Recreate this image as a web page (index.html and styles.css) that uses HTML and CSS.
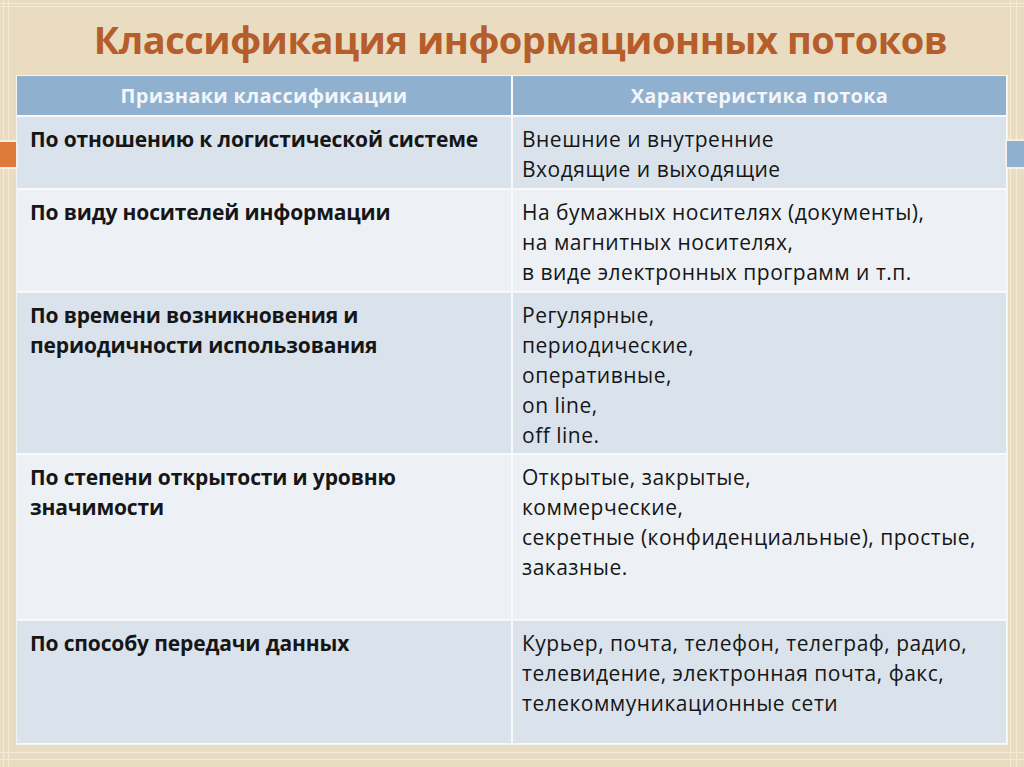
FILE: index.html
```html
<!DOCTYPE html>
<html lang="ru">
<head>
<meta charset="utf-8">
<title>Классификация информационных потоков</title>
<link rel="stylesheet" href="styles.css">
</head>
<body>
<div class="slide">
  <div class="mark mark-left"></div>
  <div class="mark mark-right"></div>
  <h1 class="title">Классификация информационных потоков</h1>
  <div class="table">
    <div class="cell head">Признаки классификации</div>
    <div class="cell head">Характеристика потока</div>

    <div class="cell key odd r1">По отношению к логистической системе</div>
    <div class="cell val odd r1">Внешние и внутренние<br>Входящие и выходящие</div>

    <div class="cell key even r2">По виду носителей информации</div>
    <div class="cell val even r2">На бумажных носителях (документы),<br>на магнитных носителях,<br>в виде электронных программ и т.п.</div>

    <div class="cell key odd r3">По времени возникновения и<br>периодичности использования</div>
    <div class="cell val odd r3">Регулярные,<br>периодические,<br>оперативные,<br>on line,<br>off line.</div>

    <div class="cell key even r4">По степени открытости и уровню<br>значимости</div>
    <div class="cell val even r4">Открытые, закрытые,<br>коммерческие,<br>секретные (конфиденциальные), простые,<br>заказные.</div>

    <div class="cell key odd r5">По способу передачи данных</div>
    <div class="cell val odd r5">Курьер, почта, телефон, телеграф, радио,<br>телевидение, электронная почта, факс,<br>телекоммуникационные сети</div>
  </div>
</div>
</body>
</html>
```

FILE: styles.css
```css
html, body {
  margin: 0;
  padding: 0;
}
body {
  width: 1024px;
  height: 767px;
  overflow: hidden;
  background-color: #e9dcc1;
  font-family: "Open Sans", "DejaVu Sans", sans-serif;
}
.slide {
  position: relative;
  width: 1024px;
  height: 767px;
  box-sizing: border-box;
  padding: 0 18px 0 17px;
  display: flex;
  flex-direction: column;
  background-image:
    linear-gradient(to right, transparent 3px, #f4ecdb 3px, #f4ecdb 4px, transparent 4px, transparent 8px, #f4ecdb 8px, #f4ecdb 9px, transparent 9px),
    linear-gradient(to left, transparent 7px, #f4ecdb 7px, #f4ecdb 8px, transparent 8px, transparent 13px, #f4ecdb 13px, #f4ecdb 14px, transparent 14px),
    linear-gradient(to bottom, transparent 3px, #f4ecdb 3px, #f4ecdb 4px, transparent 4px, transparent 6px, #f4ecdb 6px, #f4ecdb 7px, transparent 7px),
    linear-gradient(to top, transparent 7px, #f4ecdb 7px, #f4ecdb 8px, transparent 8px, transparent 14px, #f4ecdb 14px, #f4ecdb 15px, transparent 15px);
}
.mark {
  position: absolute;
  top: 142px;
  height: 25px;
}
.mark-left {
  left: 0;
  width: 16px;
  background: #e07a3a;
  box-shadow: 0 -2px 0 #f6efe2, 0 2px 0 #f6efe2, 2px 0 0 #f6efe2;
}
.mark-right {
  right: 0;
  width: 17px;
  top: 141px;
  height: 26px;
  background: #8fb0cf;
  box-shadow: 0 -2px 0 #f6efe2, 0 2px 0 #f6efe2, -2px 0 0 #f6efe2;
}
.title {
  margin: 0;
  height: 76px;
  box-sizing: border-box;
  padding: 12px 0 0 18px;
  text-align: center;
  font-size: 38px;
  line-height: 54px;
  font-weight: 700;
  color: #b65d2c;
  letter-spacing: -0.5px;
}
.table {
  display: grid;
  grid-template-columns: 494px 1fr;
  grid-template-rows: 39px 71px 101px 160px 164px 122px;
  gap: 2px;
  background: #f7f9fb;
  padding: 0 1px 1px 0;
  width: 990px;
  box-sizing: border-box;
  box-shadow: 0 0 0 1px #f2f4f3;
}
.cell {
  box-sizing: border-box;
  font-size: 21px;
  line-height: 30px;
  color: #161616;
}
.head {
  background: #8fb0cf;
  color: #f3f6f9;
  font-weight: 700;
  text-align: center;
  line-height: 39px;
  font-size: 20px;
  letter-spacing: 0.3px;
}
.odd { background: #dae3ec; }
.even { background: #edf1f5; }
.key {
  font-weight: 700;
  padding: 7px 10px 0 13px;
  letter-spacing: -0.15px;
}
.val {
  padding: 7px 8px 0 9px;
  letter-spacing: 0.5px;
}
```
